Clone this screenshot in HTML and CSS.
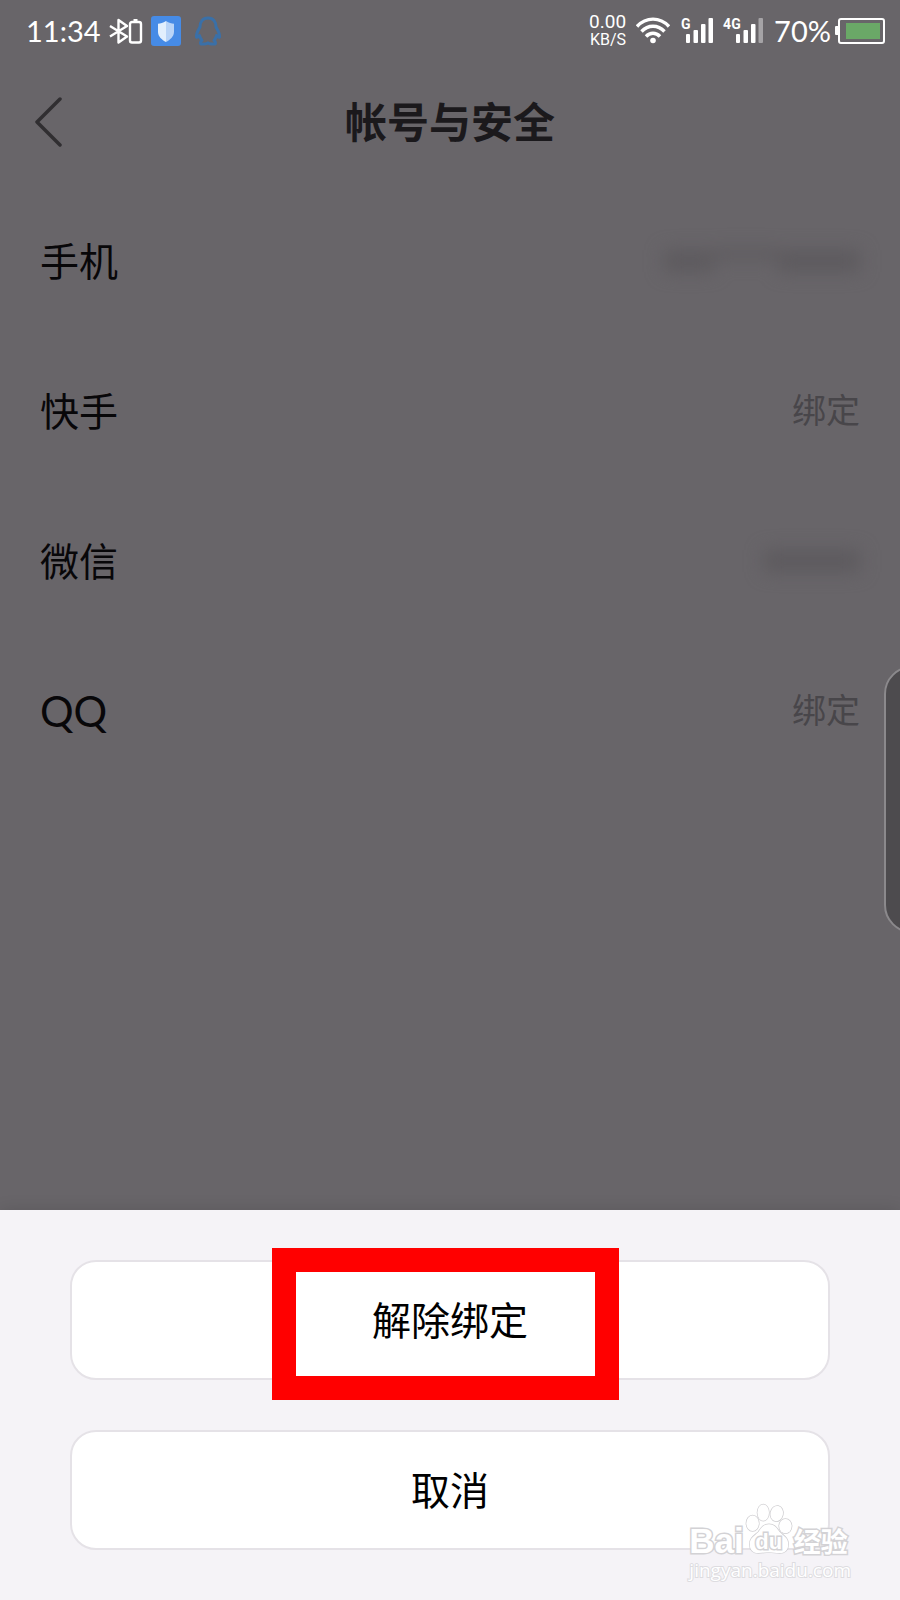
FILE: index.html
```html
<!DOCTYPE html>
<html lang="zh-CN">
<head>
  <meta charset="UTF-8">
  <title>帐号与安全</title>
  <meta name="viewport" content="width=device-width, initial-scale=1">
  <link rel="stylesheet" href="styles.css">
</head>
<body>
<div class="status-bar">
  <div class="status-left">
    <span class="clock">11:34</span>
    <svg class="bluetooth" width="34" height="28" viewBox="0 0 34 28">
      <g fill="none" stroke="#fff" stroke-width="2.400" stroke-linejoin="round">
        <path d="M1 9 L18 19.500 L9.500 25.500 V3 L18 9 L1 19.500" />
        <rect x="21" y="5" width="11" height="20.500" rx="2" />
        <path d="M24.500 3.500h4" stroke-width="3" />
      </g>
    </svg>
    <svg class="shield" width="30" height="30" viewBox="0 0 30 30">
      <rect width="30" height="30" rx="3" fill="#468be6" />
      <path d="M15 5c-3 2-5.500 2.500-8 2.700v8c0 5 4 8 8 10.300z" fill="#e2effd" />
      <path d="M15 5c3 2 5.500 2.500 8 2.700v8c0 5-4 8-8 10.300z" fill="#b9d4f7" />
    </svg>
    <svg class="penguin" width="28" height="30" viewBox="0 0 28 30">
      <path d="M14 2C8.500 2 6 6 6 11c-1.500 3-4 6-3.500 10 1 .8 2-.5 3-1.500.4 2 1.300 3.500 2.500 5-2 1-2 3.500 0 3.500 2.500 0 4.500 0 6-1.200 1.500 1.200 3.500 1.200 6 1.200 2 0 2-2.500 0-3.500 1.200-1.500 2.100-3 2.500-5 1 1 2 2.300 3 1.500C26 17 23.500 14 22 11c0-5-2.500-9-8-9z" fill="none" stroke="#3a70a8" stroke-width="3" stroke-linejoin="round" />
    </svg>
  </div>
  <div class="status-right">
    <div class="speed"><span class="rate">0.00</span><span class="unit">KB/S</span></div>
    <svg class="wifi" width="34" height="28" viewBox="0 0 34 28">
      <g fill="none" stroke="#fff" stroke-width="3.400">
        <path d="M1 9.500C10-.3 24-.3 33 9.500" />
        <path d="M5.500 14.500c6.500-7 16.500-7 23 0" />
        <path d="M10 19.500c4-4.300 10-4.300 14 0" />
      </g>
      <circle cx="17" cy="23.500" r="2.800" fill="#fff" />
    </svg>
    <div class="signal">
      <span class="net">G</span>
      <svg width="28" height="28" viewBox="0 0 28 28" fill="#fff">
        <rect x="0" y="17" width="4" height="9" rx="1" />
        <rect x="7.500" y="13" width="4.500" height="13" rx="1" />
        <rect x="15" y="7" width="4.500" height="19" rx="1" />
        <rect x="22.500" y="1" width="4.500" height="25" rx="1" />
      </svg>
    </div>
    <div class="signal signal-4g">
      <span class="net">4G</span>
      <svg width="28" height="28" viewBox="0 0 28 28" fill="#fff">
        <rect x="0" y="17" width="4" height="9" rx="1" />
        <rect x="7.500" y="13" width="4.500" height="13" rx="1" />
        <rect x="15" y="7" width="4.500" height="19" rx="1" />
        <rect x="22.500" y="1" width="4.500" height="25" rx="1" fill="#a5a3a6" />
      </svg>
    </div>
    <span class="percent">70%</span>
    <svg class="battery" width="50" height="26" viewBox="0 0 50 26">
      <rect x="0" y="8" width="4" height="9" rx="1" fill="#fff" />
      <rect x="4" y="1" width="45" height="24" rx="2" fill="none" stroke="#fff" stroke-width="2" />
      <rect x="11" y="5" width="34" height="16" fill="#6aa867" />
    </svg>
  </div>
</div>

<header class="title-bar">
  <button class="back" type="button" aria-label="返回">
    <svg width="28" height="50" viewBox="0 0 28 50">
      <path d="M26 2 L3 25 L26 48" fill="none" stroke="#302e31" stroke-width="3.500" stroke-linecap="round" stroke-linejoin="round" />
    </svg>
  </button>
  <h1>帐号与安全</h1>
</header>

<main>
  <ul class="accounts">
    <li>
      <span class="name">手机</span>
      <span class="masked"><i class="blot"></i><i class="blot blot-thin"></i><i class="blot blot-wide"></i></span>
    </li>
    <li>
      <span class="name">快手</span>
      <a class="bind" href="#">绑定</a>
    </li>
    <li>
      <span class="name">微信</span>
      <span class="masked"><i class="blot blot-name"></i></span>
    </li>
    <li>
      <span class="name name-latin">QQ</span>
      <a class="bind" href="#">绑定</a>
    </li>
  </ul>
</main>

<div class="edge-handle"></div>

<section class="sheet">
  <button class="action action-marked" type="button">解除绑定</button>
  <button class="action" type="button">取消</button>

  <div class="watermark">
    <div class="brand">
      <span class="brand-latin">Bai</span>
      <span class="paw">
        <svg width="50" height="54" viewBox="0 0 50 56">
          <g fill="#fff" stroke="#cfced1" stroke-width="1.500">
            <ellipse cx="8" cy="22" rx="6.500" ry="8" />
            <ellipse cx="19" cy="11" rx="6" ry="8.500" />
            <ellipse cx="33" cy="12" rx="6.500" ry="8" transform="rotate(12 33 12)" />
            <ellipse cx="42" cy="25" rx="6.500" ry="7.500" />
            <path d="M25 23c6 0 8 4 11 8 4 4 9 6 9 13 0 6-4 9-9 9-4 0-7-1-11-1s-7 1-11 1c-5 0-9-3-9-9 0-7 5-9 9-13 3-4 5-8 11-8z" />
          </g>
        </svg>
        <span class="du">du</span>
      </span>
      <span class="brand-cn">经验</span>
    </div>
    <span class="site">jingyan.baidu.com</span>
  </div>
</section>
</body>
</html>
```
FILE: styles.css
```css
*, *::before, *::after {
  box-sizing: border-box;
  margin: 0;
  padding: 0;
}

body {
  min-height: 100vh;
  display: flex;
  flex-direction: column;
  position: relative;
  overflow-x: hidden;
  background: #686569;
  font-family: "Noto Sans CJK SC", sans-serif;
}
button {
  font-family: inherit;
  border: 0;
  background: none;
  cursor: pointer;
}
svg {
  display: block;
  flex: none;
}

/* status bar */
.status-bar {
  display: flex;
  justify-content: space-between;
  height: 62px;
  padding: 0 15px 0 26px;
  color: #fff;
  font-family: Lato, sans-serif;
}
.status-left,
.status-right {
  display: flex;
  align-items: center;
}
.clock,
.percent {
  font-size: 29px;
  line-height: 36px;
}
.clock {
  margin-right: 8px;
}
.bluetooth {
  margin-right: 8px;
}
.shield {
  margin-right: 13px;
}
.speed {
  display: flex;
  flex-direction: column;
  align-items: flex-end;
  margin-right: 10px;
}
.rate,
.unit {
  font-family: Roboto, sans-serif;
  line-height: 18px;
}
.rate {
  font-size: 19px;
}
.unit {
  font-size: 16px;
}
.wifi {
  margin-right: 11px;
}
.signal {
  display: flex;
  position: relative;
  padding-left: 5px;
  margin-right: 9px;
}
.signal-4g {
  padding-left: 13px;
  margin-right: 10px;
}
.net {
  position: absolute;
  top: 0;
  left: 0;
  font: bold 14px/14px Roboto, sans-serif;
}
.percent {
  margin-right: 4px;
}

/* title bar */
.title-bar {
  display: grid;
  grid-template-columns: 1fr auto 1fr;
  align-items: center;
  height: 120px;
  padding: 0 34px;
}
.back {
  justify-self: start;
}
h1 {
  padding-bottom: 4px;
  font-size: 42px;
  line-height: 60px;
  color: #1b191c;
}

/* account rows */
main {
  flex: 1;
  padding: 4px 40px;
}
.accounts {
  list-style: none;
}
.accounts li {
  display: flex;
  align-items: center;
  justify-content: space-between;
  height: 150px;
}
.name {
  padding-bottom: 4px;
  font-size: 39px;
  line-height: 56px;
  color: #080709;
}
.name-latin {
  padding-bottom: 0;
  font-family: Lato, sans-serif;
  font-size: 42px;
}
.bind {
  padding-bottom: 4px;
  font-size: 34px;
  line-height: 50px;
  color: #48464a;
  text-decoration: none;
}
.masked {
  display: flex;
  align-items: center;
  filter: blur(9px);
}
.blot {
  width: 50px;
  height: 22px;
  background: #5d5a5e;
}
.blot-thin {
  width: 64px;
  height: 10px;
  margin-bottom: 14px;
}
.blot-wide {
  width: 82px;
}
.blot-name {
  width: 96px;
}

.edge-handle {
  position: absolute;
  top: 666px;
  right: -16px;
  width: 32px;
  height: 267px;
  border: 2px solid #8b898c;
  border-radius: 28px 0 0 28px;
  background: #4d4b4e;
}

/* bottom sheet */
.sheet {
  position: relative;
  display: flex;
  flex-direction: column;
  gap: 50px;
  padding: 50px 70px;
  background: #f5f3f7;
  box-shadow: 0 0 16px rgba(0, 0, 0, .12);
}
.action {
  position: relative;
  height: 120px;
  padding-bottom: 4px;
  border: 2px solid #e5e2e7;
  border-radius: 26px;
  background: #fff;
  color: #000;
  font-size: 39px;
  line-height: 56px;
}
.action-marked::after {
  content: "";
  position: absolute;
  top: -14px;
  left: calc(50% - 178px);
  width: 347px;
  height: 152px;
  border: 24px solid #f00;
}

/* watermark */
.watermark {
  position: absolute;
  right: 49px;
  bottom: 16px;
  color: #fff;
  -webkit-text-stroke: 3px #d3d2d5;
  paint-order: stroke fill;
  pointer-events: none;
}
.brand {
  display: flex;
  align-items: flex-end;
}
.brand-latin {
  font: bold 35px/30px "Liberation Sans", sans-serif;
}
.paw {
  position: relative;
}
.du {
  position: absolute;
  left: 0;
  right: 0;
  bottom: 2px;
  text-align: center;
  font: bold 22px/24px "Liberation Sans", sans-serif;
}
.brand-cn {
  font-size: 27px;
  font-weight: bold;
  line-height: 30px;
}
.site {
  display: block;
  font: 19px/28px "Open Sans", sans-serif;
  -webkit-text-stroke: 2px #dddce0;
}
```
